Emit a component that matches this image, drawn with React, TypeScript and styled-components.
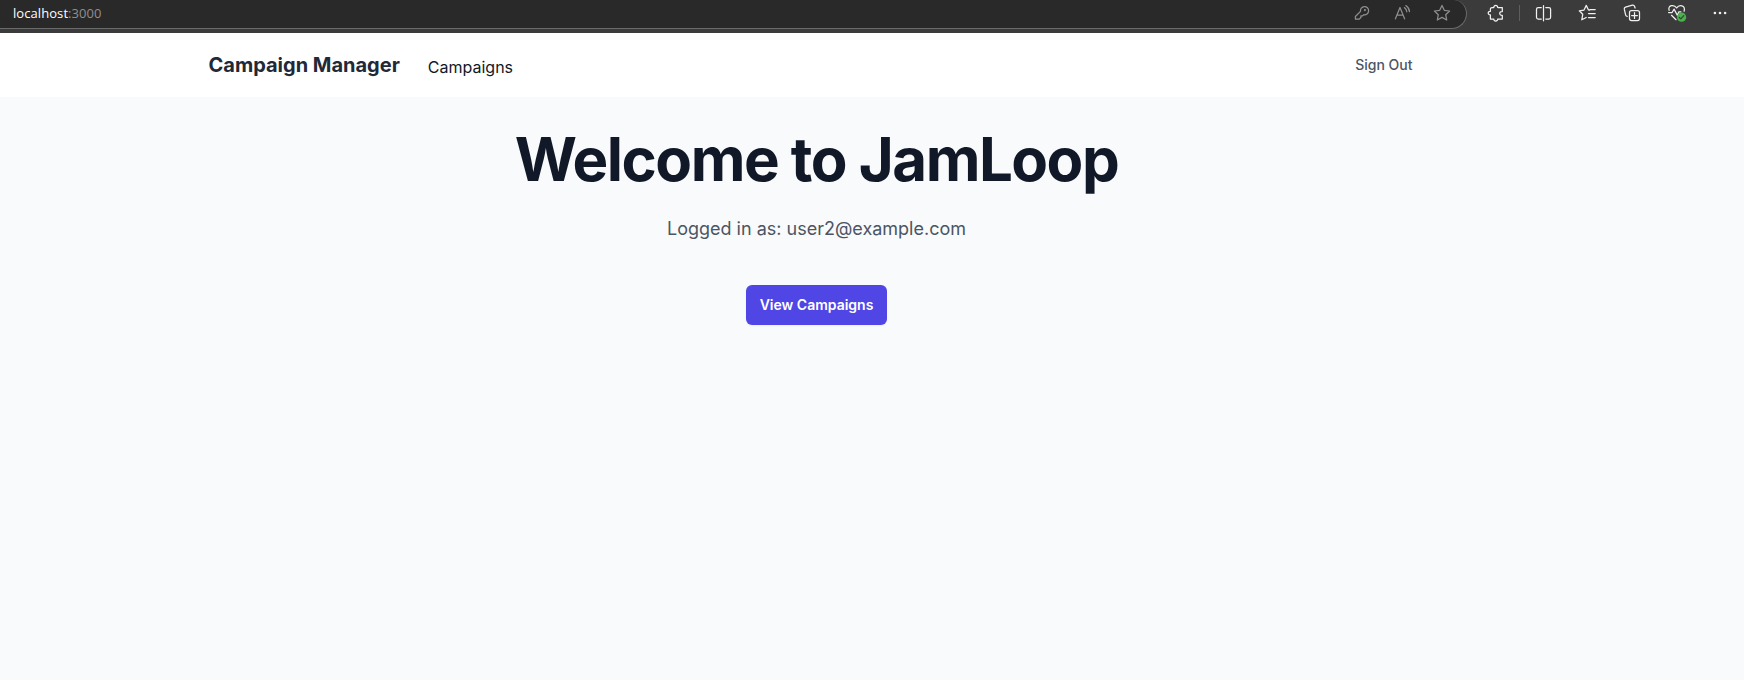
import React from 'react';
import styled, { createGlobalStyle } from 'styled-components';

const GlobalStyle = createGlobalStyle`
  *, *::before, *::after { box-sizing: border-box; }
  html, body, #root { height: 100%; }
  body { margin: 0; overflow: hidden; background: #f9fafb; font-family: Inter, sans-serif; }
`;

const Window = styled.div`
  display: flex;
  flex-direction: column;
  height: 100%;
`;

const BrowserBar = styled.header`
  flex: none;
  display: flex;
  height: 33px;
  background: #3b3b3b;
`;

const AddressBar = styled.div`
  display: flex;
  align-items: flex-start;
  justify-content: space-between;
  width: 1467px;
  height: 29px;
  padding: 1px 12px 0 13px;
  background: #292929;
  border: solid #686b6a;
  border-width: 0 1px 1px 0;
  border-radius: 0 14px 16px 0;
`;

const Url = styled.span`
  color: #ffffff;
  font: 13px/24px 'Open Sans', sans-serif;
  letter-spacing: 0.07px;
`;

const Port = styled.span`
  color: #8f8f8f;
`;

const IconRow = styled.div<{ $gap: number }>`
  display: flex;
  gap: ${(p) => p.$gap}px;
`;

const Tools = styled.div`
  display: flex;
  padding: 1px 0 0 16.5px;
`;

const Divider = styled.div`
  width: 1px;
  height: 16px;
  margin: 4px 12px 0 11.5px;
  background: #5e5e5e;
`;

const Glyph = styled.svg<{ $muted?: boolean }>`
  display: block;
  flex: none;
  width: 24px;
  height: 24px;
  fill: none;
  stroke: ${(p) => (p.$muted ? '#8e8e8e' : '#f0f0f0')};
  stroke-width: 1.25;
  stroke-linecap: round;
  stroke-linejoin: round;
`;

const Nav = styled.nav`
  flex: none;
  height: 64px;
  background: #ffffff;
`;

const NavInner = styled.div`
  display: flex;
  align-items: center;
  width: 1280px;
  height: 100%;
  margin-left: 176.5px;
  padding: 0 32px;
`;

const Brand = styled.a`
  color: #1f2937;
  font-size: 20px;
  line-height: 28px;
  font-weight: 700;
`;

const NavLink = styled.a`
  margin-left: 24px;
  padding: 4px 4px 0;
  color: #111827;
  font-size: 16px;
  line-height: 24px;
`;

const SignOut = styled.button`
  margin-left: auto;
  padding: 8px 12px;
  border: 0;
  background: none;
  color: #4b5563;
  font: 500 14px/20px Inter, sans-serif;
`;

const Main = styled.main`
  display: flex;
  flex-direction: column;
  align-items: center;
  width: 1633px;
  padding-top: 32px;
`;

const Title = styled.h1`
  margin: 0;
  color: #111827;
  font-size: 60px;
  line-height: 60px;
  font-weight: 700;
  letter-spacing: -0.025em;
`;

const Account = styled.p`
  margin: 24px 0 40px;
  color: #4b5563;
  font-size: 18px;
  line-height: 32px;
`;

const PrimaryButton = styled.a`
  padding: 10px 14px;
  border-radius: 6px;
  background: #4f46e5;
  box-shadow: 0 1px 2px rgba(0, 0, 0, 0.05);
  color: #ffffff;
  font-size: 14px;
  line-height: 20px;
  font-weight: 600;
`;

const KeyIcon = () => (
  <Glyph $muted viewBox="0 0 24 24">
    <path d="M11.4 11.2a4.1 4.1 0 1 1 3.3 3.3l-1.2 1.2h-1.7v1.6l-1.6 1.6H6.3v-2.6z" transform="translate(-.9 -.8)" />
    <circle cx="14.9" cy="9.1" r=".5" />
  </Glyph>
);

const ReadAloudIcon = () => (
  <Glyph $muted viewBox="0 0 24 24">
    <path d="M5.4 17.8 10 6.5l4.6 11.3M7 14.2h6M14.4 6.6q2.2 1.4 2.4 4.2M15.8 4.6q3.4 2.2 3.7 6" />
  </Glyph>
);

const StarIcon = () => (
  <Glyph $muted viewBox="0 0 24 24">
    <path d="m12 4.4 2.3 4.9 5.3.7-3.9 3.7 1 5.3-4.7-2.6L7.3 19l1-5.3L4.4 10l5.3-.7z" />
  </Glyph>
);

const ExtensionsIcon = () => (
  <Glyph viewBox="0 0 24 24">
    <path d="M8 6.5h1.8c-.2-2.7 4.1-2.7 3.9 0h4.6v4.1c-3.4-.5-3.4 4.2 0 3.8v3.7h-4.6c.2 2.6-4.1 2.6-3.9 0H6.4v-4.2c-2.9.2-2.9-3.8 0-3.6V8.1q0-1.6 1.6-1.6z" />
  </Glyph>
);

const SplitIcon = () => (
  <Glyph viewBox="0 0 24 24">
    <path d="M9.3 6.5h-3Q4.5 6.5 4.5 8.3v7.9q0 1.8 1.8 1.8h3M13.8 6.5h3q1.8 0 1.8 1.8v7.9q0 1.8-1.8 1.8h-3M11.5 4.5v15.3" />
  </Glyph>
);

const FavoritesIcon = () => (
  <Glyph viewBox="0 0 24 24">
    <path d="M13.6 9.1 12.5 9l-2.3-4.6L8 9.1l-4.7.7 3.4 3.5-.9 5.5 4.4-2.3M13.8 8.5h5.4M12.5 12.5h6.7M12.5 16.5h6.7" />
  </Glyph>
);

const CollectionsIcon = () => (
  <Glyph viewBox="0 0 24 24">
    <path d="M6.2 15.3q-1.3-.2-1.6-1.5L3.3 8.2q-.3-1.6 1.2-2.1l6.9-1.9q1.6-.4 2.1 1.1l.6 1.7" />
    <rect x="8.5" y="9.5" width="10" height="10" rx="2" />
    <path d="M13.5 11.6v5.8M10.6 14.5h5.8" />
  </Glyph>
);

const HealthIcon = () => (
  <Glyph viewBox="0 0 24 24">
    <path d="M4.1 9.4C2.5 3.5 9.5 3.4 11.7 7c2.1-3.6 9.4-3.3 7.4 3.2M3.6 11.5h3.5l2-3.4 3.2 6.2 1.6-3.5h2M6.5 14.3l4.5 4.4" />
    <circle cx="16.6" cy="16.2" r="4.6" fill="#4caf50" stroke="none" />
    <path d="m14.3 16.5 1.5 1.4 3-3.3" stroke="#2b4f2d" />
  </Glyph>
);

const MoreIcon = () => (
  <Glyph viewBox="0 0 24 24">
    <g fill="#f0f0f0" stroke="none">
      <circle cx="4.9" cy="12" r="1.3" />
      <circle cx="10" cy="12" r="1.3" />
      <circle cx="15.1" cy="12" r="1.3" />
    </g>
  </Glyph>
);

export default function App() {
  return (
    <Window>
      <GlobalStyle />
      <BrowserBar>
        <AddressBar>
          <Url>localhost<Port>:3000</Port></Url>
          <IconRow $gap={16}>
            <KeyIcon />
            <ReadAloudIcon />
            <StarIcon />
          </IconRow>
        </AddressBar>
        <Tools>
          <ExtensionsIcon />
          <Divider />
          <IconRow $gap={20.4}>
            <SplitIcon />
            <FavoritesIcon />
            <CollectionsIcon />
            <HealthIcon />
            <MoreIcon />
          </IconRow>
        </Tools>
      </BrowserBar>
      <Nav>
        <NavInner>
          <Brand>Campaign Manager</Brand>
          <NavLink>Campaigns</NavLink>
          <SignOut>Sign Out</SignOut>
        </NavInner>
      </Nav>
      <Main>
        <Title>Welcome to JamLoop</Title>
        <Account>Logged in as: user2@example.com</Account>
        <PrimaryButton>View Campaigns</PrimaryButton>
      </Main>
    </Window>
  );
}
